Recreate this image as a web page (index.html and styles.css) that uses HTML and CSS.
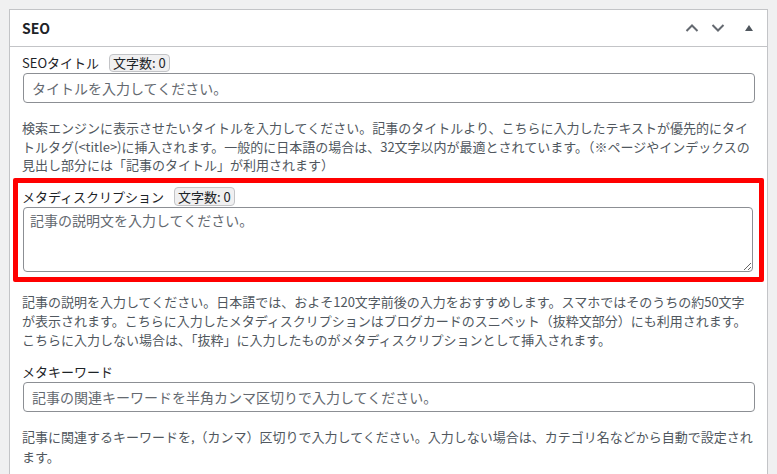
FILE: index.html
```html
<!DOCTYPE html>
<html lang="ja">
<head>
    <meta charset="UTF-8">
    <meta name="viewport" content="width=device-width, initial-scale=1.0">
    <title>SEO</title>
    <link rel="stylesheet" href="styles.css">
</head>
<body>
    <div class="postbox">
        <div class="postbox-header">
            <h2 class="hndle">SEO</h2>
            <div class="handle-actions">
                <button class="handle-btn" type="button" aria-label="上へ移動">
                    <svg width="14" height="10" viewBox="0 0 14 10"><polyline points="1.5,8 7,2.5 12.5,8" fill="none" stroke="#646970" stroke-width="2"/></svg>
                </button>
                <button class="handle-btn" type="button" aria-label="下へ移動">
                    <svg width="14" height="10" viewBox="0 0 14 10"><polyline points="1.5,2 7,7.5 12.5,2" fill="none" stroke="#646970" stroke-width="2"/></svg>
                </button>
                <button class="handle-btn toggle" type="button" aria-label="パネルを切り替え">
                    <svg width="10" height="8" viewBox="0 0 10 8"><polygon points="1,7 5,1 9,7" fill="#50575e"/></svg>
                </button>
            </div>
        </div>

        <div class="inside">
            <div class="field-row">
                <label for="seo-title">SEOタイトル</label>
                <span class="counter">文字数: 0</span>
            </div>
            <input type="text" class="text-input" id="seo-title" placeholder="タイトルを入力してください。">
            <p class="howto">検索エンジンに表示させたいタイトルを入力してください。記事のタイトルより、こちらに入力したテキストが優先的にタイトルタグ(&lt;title&gt;)に挿入されます。一般的に日本語の場合は、32文字以内が最適とされています。（※ページやインデックスの見出し部分には「記事のタイトル」が利用されます）</p>

            <div class="highlight">
                <div class="field-row">
                    <label for="meta-desc">メタディスクリプション</label>
                    <span class="counter">文字数: 0</span>
                </div>
                <textarea class="text-area" id="meta-desc" placeholder="記事の説明文を入力してください。"></textarea>
            </div>
            <p class="howto after-box">記事の説明を入力してください。日本語では、およそ120文字前後の入力をおすすめします。スマホではそのうちの約50文字が表示されます。こちらに入力したメタディスクリプションはブログカードのスニペット（抜粋文部分）にも利用されます。こちらに入力しない場合は、「抜粋」に入力したものがメタディスクリプションとして挿入されます。</p>

            <div class="field-row plain">
                <label for="meta-keywords">メタキーワード</label>
            </div>
            <input type="text" class="text-input" id="meta-keywords" placeholder="記事の関連キーワードを半角カンマ区切りで入力してください。">
            <p class="howto last">記事に関連するキーワードを,（カンマ）区切りで入力してください。入力しない場合は、カテゴリ名などから自動で設定されます。</p>
        </div>
    </div>
</body>
</html>
```

FILE: styles.css
```css
body {
    margin: 0;
    padding: 9px 0 0 9px;
    background: #f0f0f1;
    font-family: "Noto Sans CJK JP", "Noto Sans", sans-serif;
    font-size: 13px;
    color: #1d2327;
}
.postbox {
    width: 759px;
    min-height: 520px;
    box-sizing: border-box;
    background: #fff;
    border: 1px solid #c3c4c7;
}
.postbox-header {
    display: flex;
    align-items: center;
    justify-content: space-between;
    height: 36px;
    border-bottom: 1px solid #c3c4c7;
    padding-left: 12px;
}
.hndle {
    margin: 0;
    font-size: 14px;
    font-weight: 600;
    line-height: 1;
}
.handle-actions {
    display: flex;
    height: 36px;
}
.handle-btn {
    width: 26px;
    height: 36px;
    padding: 0;
    border: none;
    background: none;
    display: flex;
    align-items: center;
    justify-content: center;
    cursor: pointer;
}
.handle-btn.toggle { width: 36px; }

.inside {
    padding: 0 11px 20px 12px;
}
.field-row {
    display: flex;
    align-items: center;
    gap: 10px;
    margin-top: 7px;
    height: 18px;
    line-height: 18px;
}
.field-row label { color: #1d2327; }
.counter {
    height: 18px;
    box-sizing: border-box;
    padding: 0 3px;
    line-height: 16px;
    border: 1px solid #c3c4c7;
    border-radius: 4px;
    background: #f0f0f1;
    color: #1d2327;
}
.text-input {
    display: block;
    width: calc(100% - 2px);
    height: 30px;
    box-sizing: border-box;
    margin: 1px 1px 0;
    padding: 0 8px;
    border: 1px solid #8c8f94;
    border-radius: 4px;
    font-family: inherit;
    font-size: 14px;
    color: #2c3338;
}
.text-input::placeholder,
.text-area::placeholder { color: #646970; }
.howto {
    margin: 16px 0 0;
    line-height: 18.7px;
    color: #50575e;
}
.highlight {
    margin: 3px -8px 0 -9px;
    padding: 4px 5px 5px 4px;
    border: 5px solid #ff0000;
    border-radius: 2px;
}
.highlight .field-row {
    margin-top: 0;
    height: 19px;
}
.highlight .counter { height: 19px; line-height: 17px; }
.text-area {
    display: block;
    width: calc(100% - 2px);
    height: 65px;
    box-sizing: border-box;
    margin: 1px 1px 0;
    padding: 2px 6px;
    border: 1px solid #8c8f94;
    border-radius: 4px;
    font-family: inherit;
    font-size: 14px;
    line-height: 20px;
    color: #2c3338;
}
.howto.after-box { margin-top: 10px; line-height: 19px; }
.field-row.plain { margin-top: 14px; }
.howto.last { margin-top: 15px; line-height: 20px; }
```
